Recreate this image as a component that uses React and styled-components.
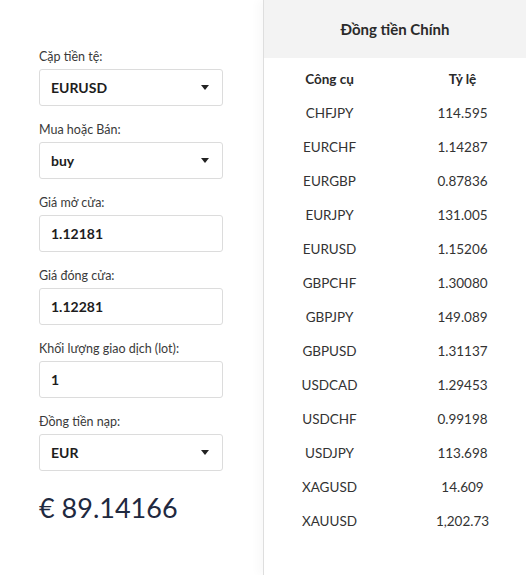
import React from "react";
import styled, { createGlobalStyle } from "styled-components";

const Global = createGlobalStyle`
  html, body { margin: 0; padding: 0; background: #fff; }
  body { font-family: Lato, "Noto Sans", sans-serif; color: #333; }
`;

const Page = styled.div`
  display: flex;
  width: 526px;
  height: 575px;
  overflow: hidden;
`;

const FormPanel = styled.div`
  width: 263px;
  box-sizing: border-box;
  padding: 49px 0 0 39px;
  display: flex;
  flex-direction: column;
  gap: 16px;
`;

const Field = styled.div`
  width: 184px;
  display: flex;
  flex-direction: column;
  gap: 4px;
`;

const Label = styled.label`
  font-size: 12.5px;
  line-height: 16px;
  color: #3a3a3a;
`;

const Box = styled.div`
  height: 37px;
  box-sizing: border-box;
  border: 1px solid #dcdcdc;
  border-radius: 3px;
  padding: 0 12px 0 11px;
  display: flex;
  align-items: center;
  justify-content: space-between;
  font-size: 14px;
  font-weight: 700;
  color: #1d1d1d;
`;

const Caret = styled.span`
  width: 0;
  height: 0;
  border-left: 4.5px solid transparent;
  border-right: 4.5px solid transparent;
  border-top: 5px solid #222;
  margin-right: 1px;
`;

const Result = styled.div`
  margin-top: 3px;
  font-size: 27px;
  line-height: 36px;
  color: #1f2940;
`;

const RatesPanel = styled.div`
  flex: 1;
  border-left: 1px solid #dedede;
  box-shadow: -6px 0 8px rgba(0, 0, 0, 0.025);
  display: flex;
  flex-direction: column;
`;

const Header = styled.div`
  height: 58px;
  background: #f3f3f3;
  display: flex;
  align-items: center;
  justify-content: center;
  font-size: 15px;
  font-weight: 700;
  color: #2a2a2a;
`;

const Table = styled.div`
  padding-top: 4px;
  display: grid;
  grid-template-columns: 1fr 1fr;
  grid-auto-rows: 34px;
`;

const Cell = styled.div`
  display: flex;
  align-items: center;
  justify-content: center;
  font-size: 13.5px;
  font-weight: ${(p) => (p.$head ? 700 : 400)};
  color: ${(p) => (p.$head ? "#2a2a2a" : "#333")};
  padding-left: ${(p) => (p.$right ? "4px" : "0")};
`;

const fields = [
  { label: "Cặp tiền tệ:", value: "EURUSD", select: true },
  { label: "Mua hoặc Bán:", value: "buy", select: true },
  { label: "Giá mở cửa:", value: "1.12181" },
  { label: "Giá đóng cửa:", value: "1.12281" },
  { label: "Khối lượng giao dịch (lot):", value: "1" },
  { label: "Đồng tiền nạp:", value: "EUR", select: true },
];

const rates = [
  ["CHFJPY", "114.595"],
  ["EURCHF", "1.14287"],
  ["EURGBP", "0.87836"],
  ["EURJPY", "131.005"],
  ["EURUSD", "1.15206"],
  ["GBPCHF", "1.30080"],
  ["GBPJPY", "149.089"],
  ["GBPUSD", "1.31137"],
  ["USDCAD", "1.29453"],
  ["USDCHF", "0.99198"],
  ["USDJPY", "113.698"],
  ["XAGUSD", "14.609"],
  ["XAUUSD", "1,202.73"],
];

export default function App() {
  return (
    <Page>
      <Global />
      <FormPanel>
        {fields.map((f) => (
          <Field key={f.label}>
            <Label>{f.label}</Label>
            <Box>
              <span>{f.value}</span>
              {f.select && <Caret />}
            </Box>
          </Field>
        ))}
        <Result>€ 89.14166</Result>
      </FormPanel>
      <RatesPanel>
        <Header>Đồng tiền Chính</Header>
        <Table>
          <Cell $head>Công cụ</Cell>
          <Cell $head $right>Tỷ lệ</Cell>
          {rates.map(([sym, rate]) => (
            <React.Fragment key={sym}>
              <Cell>{sym}</Cell>
              <Cell $right>{rate}</Cell>
            </React.Fragment>
          ))}
        </Table>
      </RatesPanel>
    </Page>
  );
}
